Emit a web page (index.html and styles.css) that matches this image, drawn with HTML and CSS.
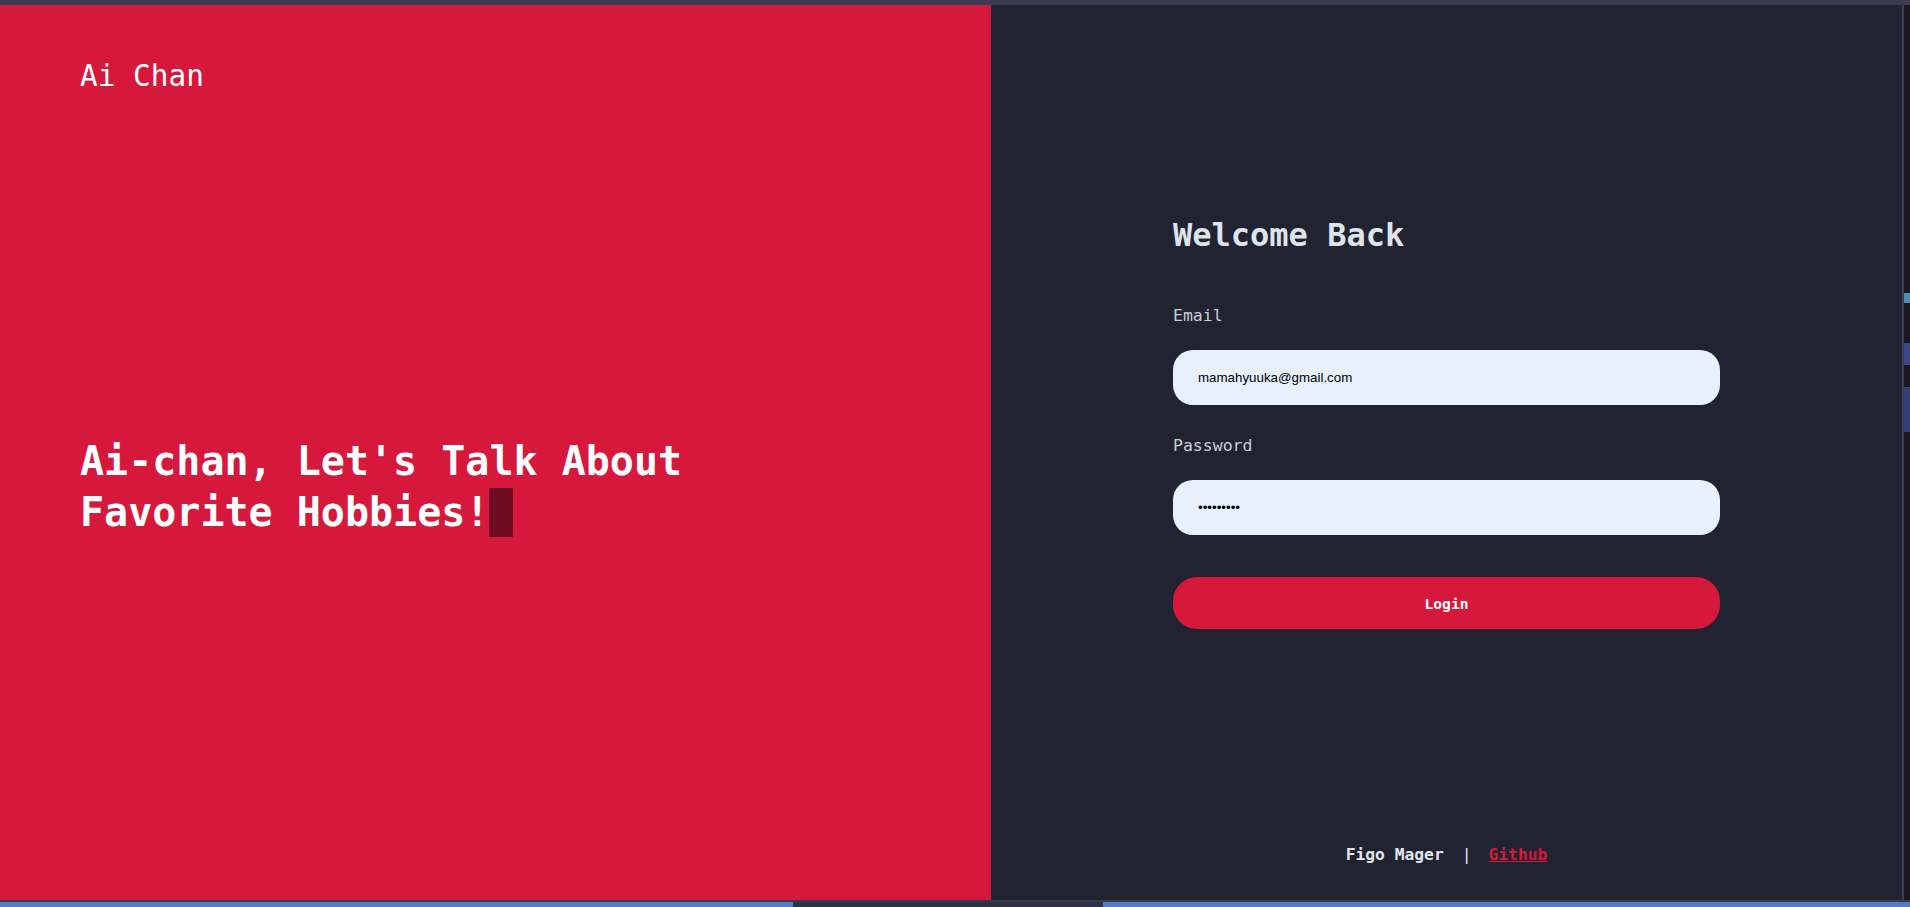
FILE: index.html
```html
<!DOCTYPE html>
<html lang="en">
<head>
<meta charset="utf-8">
<title>Ai Chan - Login</title>
<link rel="stylesheet" href="styles.css">
</head>
<body>
<div class="screen">
  <div class="topbar"></div>
  <div class="middle">
    <div class="app">
      <section class="hero">
        <div class="brand">Ai Chan</div>
        <h1 class="tagline">Ai-chan, Let's Talk About<br>Favorite Hobbies!<span class="cursor"></span></h1>
      </section>
      <section class="auth">
        <form class="login">
          <h2 class="title">Welcome Back</h2>
          <label class="label" for="email">Email</label>
          <input class="field" id="email" type="email" value="mamahyuuka@gmail.com">
          <label class="label label-pw" for="password">Password</label>
          <input class="field" id="password" type="password" value="123456789">
          <button class="submit" type="button">Login</button>
        </form>
        <footer class="credits">Figo Mager<span class="sep">|</span><a class="gh" href="#">Github</a></footer>
      </section>
    </div>
    <div class="edge">
      <div class="edge-line"></div>
      <div class="desk">
        <div class="desk-bit bit-a"></div>
        <div class="desk-bit bit-b"></div>
        <div class="desk-bit bit-c"></div>
      </div>
    </div>
  </div>
  <div class="bottombar">
    <div class="bottom-line"></div>
    <div class="taskbar">
      <div class="task-blue task-left"></div>
      <div class="task-dark"></div>
      <div class="task-blue task-right"></div>
    </div>
  </div>
</div>
</body>
</html>
```

FILE: styles.css
```css
html, body {
  margin: 0;
  padding: 0;
  overflow: hidden;
  background: #1b1724;
}

.screen {
  width: 1910px;
  height: 907px;
  display: flex;
  flex-direction: column;
}

.topbar {
  height: 5px;
  background: #3e3a4f;
}

.middle {
  height: 895px;
  display: flex;
}

.app {
  width: 1902px;
  display: flex;
}

.hero {
  width: 991px;
  box-sizing: border-box;
  padding: 54px 0 0 80px;
  background: #d5183b;
  color: #ffffff;
  font-family: "DejaVu Sans Mono", monospace;
}

.brand {
  font-size: 29.4px;
  line-height: 34px;
}

.tagline {
  margin: 343px 0 0;
  font-size: 40px;
  line-height: 51px;
  font-weight: bold;
}

.cursor {
  display: inline-block;
  width: 24px;
  height: 49px;
  background: #6d0b1f;
  vertical-align: -11px;
}

.auth {
  flex: 1;
  display: flex;
  flex-direction: column;
  align-items: center;
  background: #212430;
  font-family: "DejaVu Sans Mono", monospace;
}

.login {
  width: 547px;
  margin: 212px 0 0;
  display: flex;
  flex-direction: column;
}

.title {
  margin: 0;
  font-size: 32px;
  line-height: 37px;
  font-weight: bold;
  color: #dfe3ea;
}

.label {
  margin-top: 52px;
  font-size: 16.5px;
  line-height: 19px;
  color: #c9ced8;
}

.label-pw {
  margin-top: 31px;
}

.field {
  margin-top: 25px;
  height: 55px;
  box-sizing: border-box;
  border: none;
  border-radius: 20px;
  background: #e8f0fe;
  padding: 0 25px;
  font-family: "Liberation Sans", Arial, sans-serif;
  font-size: 13.33px;
  color: #000000;
  outline: none;
}

.submit {
  margin-top: 42px;
  height: 52px;
  border: none;
  border-radius: 24px;
  background: #d5183b;
  color: #ffffff;
  font-family: "DejaVu Sans Mono", monospace;
  font-size: 14.6px;
  font-weight: bold;
}

.credits {
  margin-top: auto;
  padding-bottom: 36px;
  font-size: 16.3px;
  line-height: 19px;
  font-weight: bold;
  color: #e2e6ee;
}

.sep {
  margin: 0 17px 0 18px;
  font-weight: normal;
}

.gh {
  color: #d5183b;
  text-decoration: underline;
}

.edge {
  width: 8px;
  display: flex;
}

.edge-line {
  width: 2px;
  background: #3a3f56;
}

.desk {
  flex: 1;
  display: flex;
  flex-direction: column;
  background: #1b1622;
}

.desk-bit {
  background: #3b4a86;
}

.bit-a {
  margin-top: 288px;
  height: 10px;
  background: #4f8fb0;
}

.bit-b {
  margin-top: 40px;
  height: 22px;
}

.bit-c {
  margin-top: 22px;
  height: 45px;
  background: #34407a;
}

.bottombar {
  height: 7px;
  display: flex;
  flex-direction: column;
}

.bottom-line {
  height: 2px;
  background: #343a51;
}

.taskbar {
  flex: 1;
  display: flex;
}

.task-blue {
  background: #5a7bbf;
}

.task-left {
  width: 793px;
}

.task-dark {
  width: 310px;
  background: #2d3146;
}

.task-right {
  flex: 1;
}
```
